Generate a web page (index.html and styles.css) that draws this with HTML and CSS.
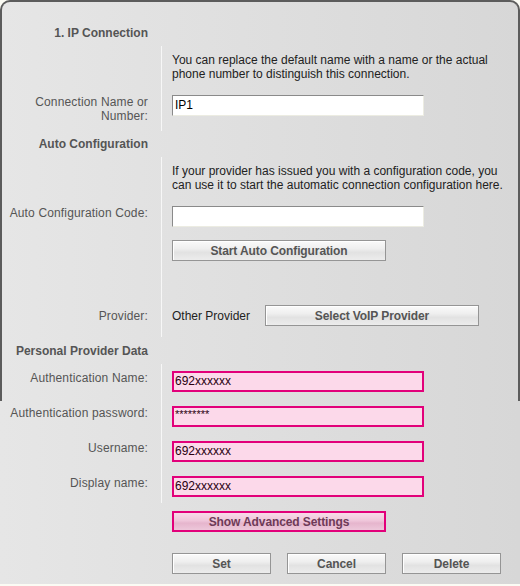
FILE: index.html
```html
<!DOCTYPE html>
<html>
<head>
<meta charset="utf-8">
<link rel="stylesheet" href="styles.css">
</head>
<body>
<div class="panel">
  <div class="head head-first">1. IP Connection</div>
  <div class="group group-ip">
    <div class="lbl"></div>
    <div class="cell cell-desc"><p class="desc">You can replace the default name with a name or the actual phone number to distinguish this connection.</p></div>
    <div class="lbl">Connection Name or<br>Number:</div>
    <div class="cell cell-last15"><div class="field">IP1</div></div>
  </div>

  <div class="head head-mid">Auto Configuration</div>
  <div class="group">
    <div class="lbl"></div>
    <div class="cell cell-desc"><p class="desc">If your provider has issued you with a configuration code, you can use it to start the automatic connection configuration here.</p></div>
    <div class="lbl">Auto Configuration Code:</div>
    <div class="cell cell-pad13"><div class="field"></div></div>
    <div class="lbl"></div>
    <div class="cell cell-pad44"><button class="btn btn-wide">Start Auto Configuration</button></div>
    <div class="lbl lbl-mid">Provider:</div>
    <div class="cell cell-pad11 provider"><span class="provider-name">Other Provider</span><button class="btn btn-wide">Select VoIP Provider</button></div>
  </div>

  <div class="head head-last">Personal Provider Data</div>
  <div class="group">
    <div class="lbl lbl-first">Authentication Name:</div>
    <div class="cell cell-first cell-pad14"><div class="field field-pink">692xxxxxx</div></div>
    <div class="lbl">Authentication password:</div>
    <div class="cell cell-pad14"><div class="field field-pink field-pw">********</div></div>
    <div class="lbl">Username:</div>
    <div class="cell cell-pad14"><div class="field field-pink">692xxxxxx</div></div>
    <div class="lbl">Display name:</div>
    <div class="cell cell-pad6"><div class="field field-pink">692xxxxxx</div></div>
  </div>

  <div class="actions">
    <button class="btn btn-wide btn-pink">Show Advanced Settings</button>
    <div class="btn-row">
      <button class="btn btn-small">Set</button>
      <button class="btn btn-small">Cancel</button>
      <button class="btn btn-small">Delete</button>
    </div>
  </div>
</div>
</body>
</html>
```
FILE: styles.css
```css
html, body {
  margin: 0;
  padding: 0;
  background: #fbfbf4;
}

body {
  font-family: "Liberation Sans", Arial, sans-serif;
  font-size: 12px;
  line-height: 14px;
  color: #222;
}

.panel {
  position: relative;
  width: 520px;
  height: 584px;
  background: linear-gradient(to right, #e6e6e6, #d7d7d7);
  border-radius: 10px 10px 0 0;
  box-sizing: border-box;
}

.panel::before {
  content: "";
  position: absolute;
  top: 0;
  left: 0;
  right: 0;
  height: 401px;
  border: 2px solid #5c5c5c;
  border-bottom: 0;
  border-radius: 10px 10px 0 0;
  box-sizing: border-box;
  pointer-events: none;
}

.head {
  width: 148px;
  text-align: right;
  font-weight: bold;
  color: #555;
  height: 14px;
}

.head-first { padding: 26px 0 6px; }
.head-mid { padding: 6px 0 6px; }
.head-last { padding: 7px 0 6px; }

.group {
  display: grid;
  grid-template-columns: 148px 1fr;
}

.lbl {
  text-align: right;
  color: #555;
  letter-spacing: 0.15px;
}

.lbl-mid {
  align-self: center;
  padding-bottom: 11px;
}

.lbl-first { padding-top: 7px; }

.cell {
  margin-left: 13px;
  border-left: 1px solid #f7f7f7;
  padding-left: 10px;
}

.cell-desc { padding-top: 7px; padding-bottom: 14px; }
.cell-first { padding-top: 7px; }
.cell-last15 { padding-bottom: 15px; }
.cell-pad13 { padding-bottom: 13px; }
.cell-pad14 { padding-bottom: 14px; }
.cell-pad44 { padding-bottom: 44px; }
.cell-pad11 { padding-bottom: 11px; }
.cell-pad6 { padding-bottom: 6px; }

.desc {
  margin: 0;
  width: 345px;
  color: #222;
}

.field {
  box-sizing: border-box;
  width: 252px;
  height: 21px;
  background: #fff;
  border: 1px solid;
  border-color: #8a8a8a #ecece2 #ecece2 #8a8a8a;
  padding: 2px 0 0 2px;
  color: #000;
  line-height: 15px;
}

.field-pink {
  background: #fcd9ea;
  border: 2px solid #e2007a;
  padding: 1px 0 0 1px;
  color: #2a0010;
}

.field-pw {
  font-size: 11px;
  line-height: 11px;
}

.btn {
  box-sizing: border-box;
  height: 21px;
  border: 1px solid #959595;
  background: linear-gradient(#fafafa, #efefef 40%, #e2e2e2 60%, #ececec);
  box-shadow: inset 1px 1px 0 #fff;
  font-family: "Liberation Sans", Arial, sans-serif;
  font-size: 12px;
  font-weight: bold;
  color: #555;
  padding: 0;
  margin: 0;
  text-align: center;
  letter-spacing: -0.1px;
}

.btn-wide { width: 214px; display: block; }

.btn-small { width: 99px; }

.provider {
  display: flex;
  align-items: center;
}

.provider-name {
  width: 93px;
  color: #222;
}

.actions {
  padding-left: 172px;
  padding-top: 8px;
}

.btn-pink {
  border: 2px solid #e2007a;
  background: linear-gradient(#f8dbe9, #efc6da 45%, #e6b5cd 60%, #edc7da);
  box-shadow: none;
  color: #6e3a57;
}

.btn-row {
  display: flex;
  gap: 16px;
  margin-top: 21px;
}
```
